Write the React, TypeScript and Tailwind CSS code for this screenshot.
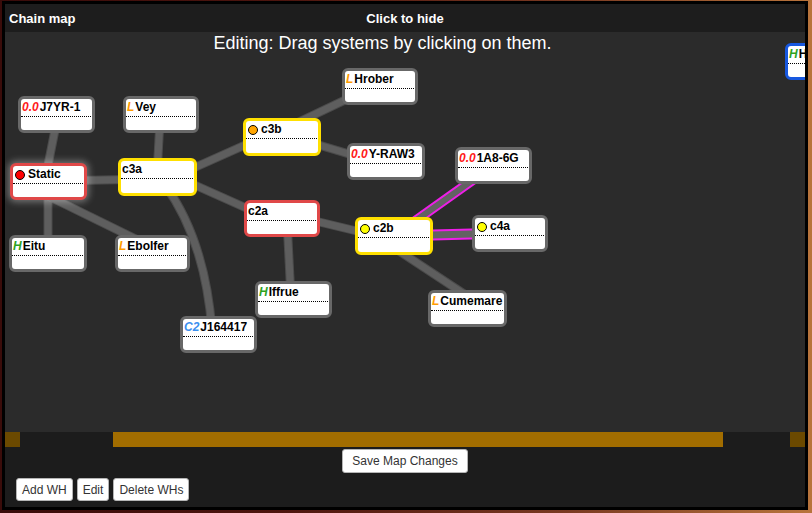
import React from "react";

type Node = {
  name: string;
  pos: string;
  border: string;
  prefix?: { t: string; c: string };
  dot?: string;
  glow?: boolean;
};

const GRAY = "border-[#686868]";
const YELLOW = "border-[#ffe000]";
const RED = "border-[#e04848]";
const BLUE = "border-[#1758e0]";

const P00 = { t: "0.0", c: "text-[#ff1a1a]" };
const PL = { t: "L", c: "text-[#ff9c00]" };
const PH = { t: "H", c: "text-[#2ea31e]" };
const PC2 = { t: "C2", c: "text-[#3a8fef]" };

const nodes: Node[] = [
  { name: "J7YR-1", pos: "left-[13px] top-[64px] w-[77px] h-[37px]", border: GRAY, prefix: P00 },
  { name: "Vey", pos: "left-[118px] top-[64px] w-[76px] h-[37px]", border: GRAY, prefix: PL },
  { name: "Hrober", pos: "left-[337px] top-[36px] w-[76px] h-[37px]", border: GRAY, prefix: PL },
  { name: "c3b", pos: "left-[238px] top-[86px] w-[78px] h-[38px]", border: YELLOW, dot: "bg-[#ffa500]" },
  { name: "Y-RAW3", pos: "left-[342px] top-[111px] w-[78px] h-[37px]", border: GRAY, prefix: P00 },
  { name: "c3a", pos: "left-[113px] top-[126px] w-[79px] h-[38px]", border: YELLOW },
  { name: "Static", pos: "left-[5px] top-[131px] w-[77px] h-[37px]", border: RED, dot: "bg-[#ff0000]", glow: true },
  { name: "1A8-6G", pos: "left-[450px] top-[115px] w-[77px] h-[37px]", border: GRAY, prefix: P00 },
  { name: "c2a", pos: "left-[239px] top-[168px] w-[76px] h-[37px]", border: RED },
  { name: "c2b", pos: "left-[350px] top-[185px] w-[78px] h-[38px]", border: YELLOW, dot: "bg-[#ffff00]" },
  { name: "c4a", pos: "left-[467px] top-[183px] w-[76px] h-[37px]", border: GRAY, dot: "bg-[#ffff00]" },
  { name: "Eitu", pos: "left-[4px] top-[203px] w-[78px] h-[37px]", border: GRAY, prefix: PH },
  { name: "Ebolfer", pos: "left-[110px] top-[203px] w-[75px] h-[37px]", border: GRAY, prefix: PL },
  { name: "Iffrue", pos: "left-[250px] top-[249px] w-[77px] h-[37px]", border: GRAY, prefix: PH },
  { name: "J164417", pos: "left-[175px] top-[284px] w-[77px] h-[37px]", border: GRAY, prefix: PC2 },
  { name: "Cumemare", pos: "left-[423px] top-[258px] w-[79px] h-[37px]", border: GRAY, prefix: PL },
  { name: "Hek", pos: "left-[780px] top-[11px] w-[70px] h-[37px]", border: BLUE, prefix: PH },
];

const edges: [number, number, number, number][] = [
  [52, 88, 40, 148],
  [155, 88, 152, 143],
  [45, 149, 150, 147],
  [43, 149, 43, 218],
  [35, 160, 145, 214],
  [155, 151, 277, 96.6],
  [155, 137.5, 277, 192],
  [277, 98, 375, 51.4],
  [277, 102, 381, 133],
  [277, 181, 389, 208],
  [282, 188, 286, 266],
  [389, 215.7, 463, 264.6],
];

const magenta: [number, number, number, number][] = [
  [389, 204, 488, 133.7],
  [389, 204, 505, 201],
];

function MapNode({ n }: { n: Node }) {
  return (
    <div
      className={`absolute ${n.pos} ${n.border} border-[3px] rounded-[6px] bg-white ${
        n.glow ? "shadow-[0_0_7px_2px_rgba(255,255,255,0.35)]" : ""
      }`}
    >
      <div className="h-[18px] mr-[1px] border-b border-dotted border-black flex items-start pt-[1px] pl-[1px] overflow-hidden whitespace-nowrap">
        {n.dot && (
          <span
            className={`mt-[3px] ml-[1px] mr-[3px] w-[10px] h-[10px] rounded-full border border-black shrink-0 ${n.dot}`}
          />
        )}
        {n.prefix && (
          <span className={`italic font-bold text-[12px] leading-[14px] mr-[1px] ${n.prefix.c}`}>
            {n.prefix.t}
          </span>
        )}
        <span className="font-bold text-[12px] leading-[14px] text-black">{n.name}</span>
      </div>
    </div>
  );
}

export default function App() {
  return (
    <div className="w-[812px] h-[513px] overflow-hidden pt-[1px] pl-[2px] pr-[4px] pb-[3px] bg-[linear-gradient(90deg,#3a0c0a_0%,#4e160f_35%,#7a3a22_70%,#b8743c_100%)] font-['Liberation_Sans',Arial,sans-serif]">
      <div className="h-full border-[3px] border-black flex flex-col bg-[#1c1c1c]">
        {/* header */}
        <div className="h-[28px] shrink-0 grid grid-cols-[1fr_auto_1fr] items-center bg-[#1d1d1d] text-white font-bold text-[13px] px-[4px] pt-[1px]">
          <span>Chain map</span>
          <span>Click to hide</span>
          <span />
        </div>

        {/* canvas */}
        <div className="relative h-[400px] shrink-0 overflow-hidden bg-[#2b2b2b]">
          <svg className="absolute inset-0" width="800" height="400">
            {edges.map(([x1, y1, x2, y2], i) => (
              <g key={i}>
                <line x1={x1} y1={y1} x2={x2} y2={y2} stroke="#707070" strokeOpacity="0.45" strokeWidth="9" />
                <line x1={x1} y1={y1} x2={x2} y2={y2} stroke="#5e5e5e" strokeWidth="7" />
              </g>
            ))}
            <path d="M160,153 Q200,208 207,298" fill="none" stroke="#707070" strokeOpacity="0.45" strokeWidth="9" />
            <path d="M160,153 Q200,208 207,298" fill="none" stroke="#5e5e5e" strokeWidth="7" />
            {magenta.map(([x1, y1, x2, y2], i) => (
              <g key={i}>
                <line x1={x1} y1={y1} x2={x2} y2={y2} stroke="#ee1ee8" strokeWidth={i === 0 ? 10 : 11} />
                <line x1={x1} y1={y1} x2={x2} y2={y2} stroke="#626262" strokeWidth={i === 0 ? 6 : 7} />
              </g>
            ))}
          </svg>
          <div className="relative text-center text-white text-[18px] leading-[21px] pt-[1px] mr-[45px]">
            Editing: Drag systems by clicking on them.
          </div>
          {nodes.map((n) => (
            <MapNode key={n.name} n={n} />
          ))}
        </div>

        {/* scrollbar */}
        <div className="h-[15px] shrink-0 flex bg-[#1c1c1c]">
          <div className="w-[15px] bg-[#6b4900]" />
          <div className="w-[93px]" />
          <div className="w-[610px] bg-[#a26d00]" />
          <div className="flex-1" />
          <div className="w-[15px] bg-[#6b4900]" />
        </div>

        {/* bottom */}
        <div className="flex-1 flex flex-col bg-[#1c1c1c]">
          <div className="flex justify-center pt-[2px]">
            <button className="h-[24px] px-[9px] bg-white border border-[#b5b5b5] rounded-[3px] text-[12px] text-[#333]">
              Save Map Changes
            </button>
          </div>
          <div className="flex gap-[4px] pl-[11px] pt-[5px]">
            <button className="h-[23px] px-[5px] bg-white border border-[#b5b5b5] rounded-[3px] text-[12px] text-[#333]">
              Add WH
            </button>
            <button className="h-[23px] px-[5px] bg-white border border-[#b5b5b5] rounded-[3px] text-[12px] text-[#333]">
              Edit
            </button>
            <button className="h-[23px] px-[5px] bg-white border border-[#b5b5b5] rounded-[3px] text-[12px] text-[#333]">
              Delete WHs
            </button>
          </div>
        </div>
      </div>
    </div>
  );
}
